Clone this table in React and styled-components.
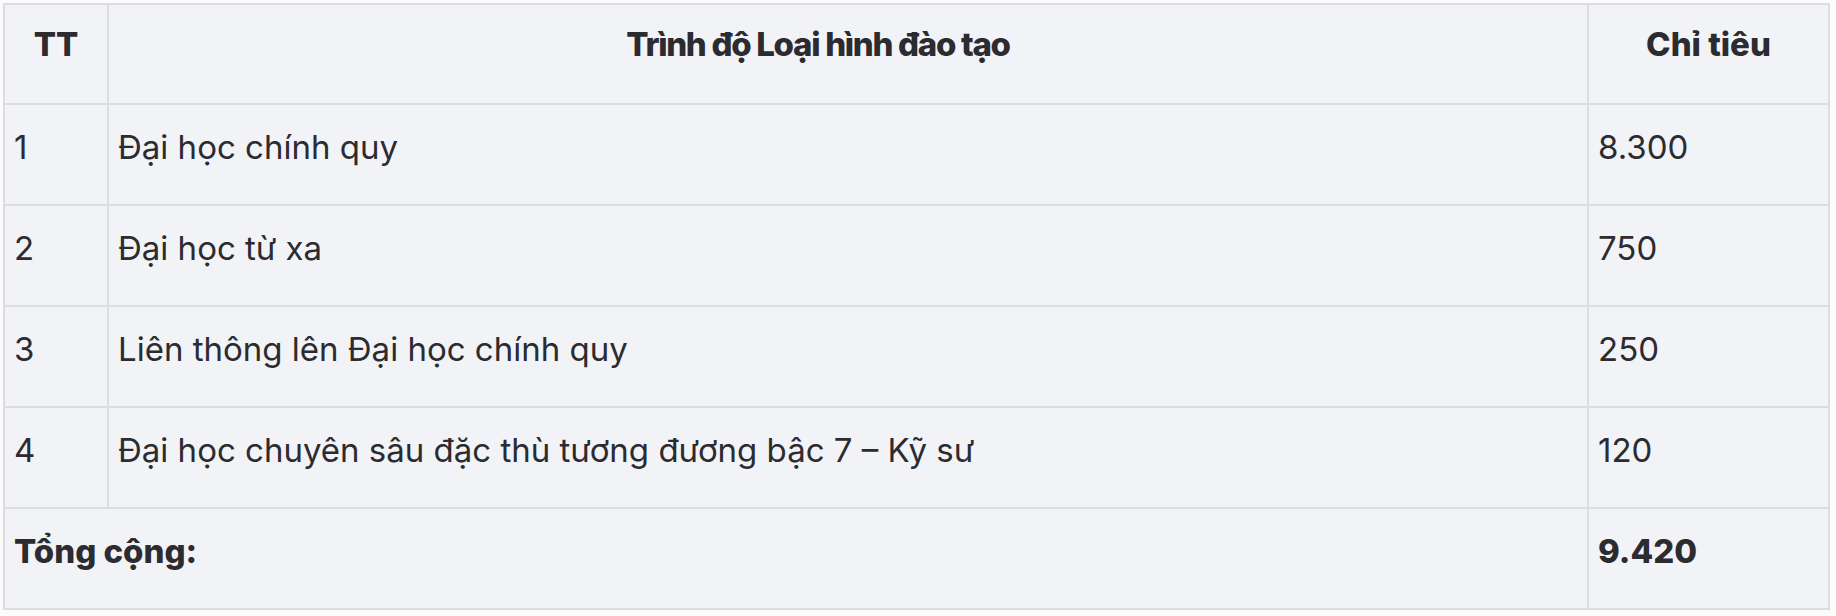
import React from 'react'
import styled, { createGlobalStyle } from 'styled-components'

const GlobalStyle = createGlobalStyle`
  html, body {
    margin: 0;
    padding: 0;
    background: #fbfbfc;
  }
  body {
    padding: 3px 0 0 3px;
  }
`

const rows = [
  { tt: '1', name: 'Đại học chính quy', value: '8.300' },
  { tt: '2', name: 'Đại học từ xa', value: '750' },
  { tt: '3', name: 'Liên thông lên Đại học chính quy', value: '250' },
  { tt: '4', name: 'Đại học chuyên sâu đặc thù tương đương bậc 7 – Kỹ sư', value: '120' },
]

export default function App() {
  return (
    <>
      <GlobalStyle />
      <Table>
        <colgroup>
          <col style={{ width: 104 }} />
          <col style={{ width: 1480 }} />
          <col style={{ width: 241 }} />
        </colgroup>
        <thead>
          <Row $h={100}>
            <HeadCell>TT</HeadCell>
            <HeadCell $shift>Trình độ Loại hình đào tạo</HeadCell>
            <HeadCell>Chỉ tiêu</HeadCell>
          </Row>
        </thead>
        <tbody>
          {rows.map((r) => (
            <Row key={r.tt} $h={101}>
              <Cell>{r.tt}</Cell>
              <Cell>{r.name}</Cell>
              <Cell>{r.value}</Cell>
            </Row>
          ))}
          <Row $h={101}>
            <Cell colSpan={2} $bold>Tổng cộng:</Cell>
            <Cell $bold>9.420</Cell>
          </Row>
        </tbody>
      </Table>
    </>
  )
}

const Table = styled.table`
  width: 1827px;
  table-layout: fixed;
  border-collapse: collapse;
  background: #f2f3f7;
  border: 2px solid #dcdde2;
  font-family: Inter, 'Noto Sans', sans-serif;
  color: #2b2b30;
`

const Row = styled.tr`
  height: ${(p) => p.$h}px;
`

const HeadCell = styled.th`
  border: 2px solid #dcdde2;
  vertical-align: top;
  text-align: center;
  padding: 19px 8px 0;
  padding-right: ${(p) => (p.$shift ? '68px' : '8px')};
  font-size: 33px;
  font-weight: 800;
  line-height: 40px;
  letter-spacing: ${(p) => (p.$shift ? '-1.3px' : 'normal')};
`

const Cell = styled.td`
  border: 2px solid #dcdde2;
  vertical-align: top;
  text-align: left;
  padding: 22px 9px 0;
  font-size: 33px;
  font-weight: ${(p) => (p.$bold ? 800 : 400)};
  line-height: 40px;
`
